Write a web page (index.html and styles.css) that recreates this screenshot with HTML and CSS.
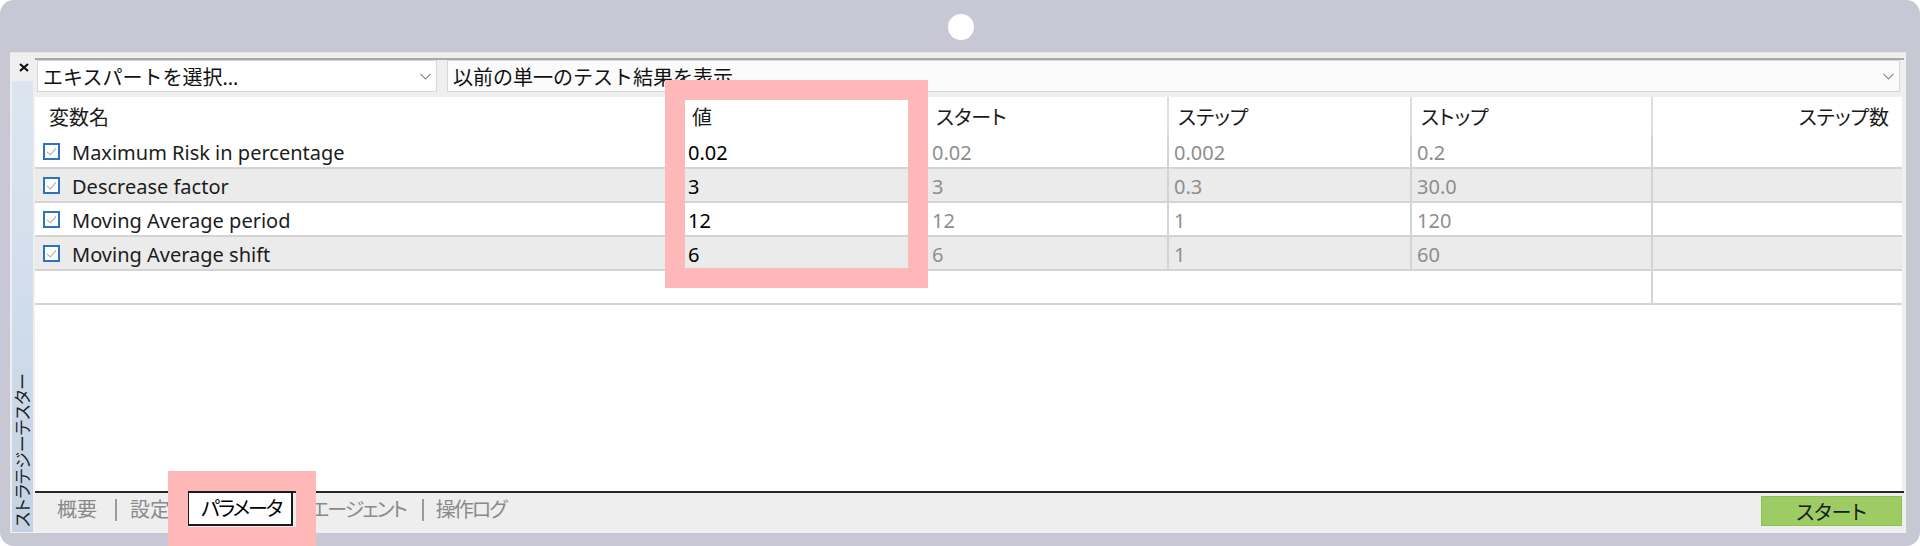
FILE: index.html
```html
<!DOCTYPE html>
<html lang="ja">
<head>
    <meta charset="UTF-8">
    <title>ストラテジーテスター</title>
    <link rel="stylesheet" href="styles.css">
</head>
<body>
    <div class="frame">
        <div class="frame-top">
            <div class="camera"></div>
        </div>

        <div class="panel">
            <!-- Side strip -->
            <div class="side">
                <div class="close">
                    <svg width="10" height="9" viewBox="0 0 10 9"><path d="M1 1 L9 8 M9 1 L1 8" stroke="#111" stroke-width="2.2"/></svg>
                </div>
                <div class="side-tab"><span>ストラテジーテスター</span></div>
            </div>

            <div class="main">
                <!-- Toolbar -->
                <div class="toolbar">
                    <div class="select select-expert">
                        <span>エキスパートを選択...</span>
                        <svg class="chevron" width="11" height="7" viewBox="0 0 11 7"><polyline points="0.5,0.8 5.5,5.8 10.5,0.8" fill="none" stroke="#8a8a8a" stroke-width="1.2"/></svg>
                    </div>
                    <div class="select select-history">
                        <span>以前の単一のテスト結果を表示</span>
                        <svg class="chevron" width="11" height="7" viewBox="0 0 11 7"><polyline points="0.5,0.8 5.5,5.8 10.5,0.8" fill="none" stroke="#8a8a8a" stroke-width="1.2"/></svg>
                    </div>
                </div>

                <!-- Parameter grid -->
                <div class="grid">
                    <div class="row head">
                        <div class="cell name">変数名</div>
                        <div class="cell">値</div>
                        <div class="cell">スタート</div>
                        <div class="cell">ステップ</div>
                        <div class="cell">ストップ</div>
                        <div class="cell count">ステップ数</div>
                    </div>
                    <div class="row">
                        <div class="cell name"><span class="check"></span>Maximum Risk in percentage</div>
                        <div class="cell value">0.02</div>
                        <div class="cell dim">0.02</div>
                        <div class="cell dim">0.002</div>
                        <div class="cell dim">0.2</div>
                        <div class="cell"></div>
                    </div>
                    <div class="row alt">
                        <div class="cell name"><span class="check"></span>Descrease factor</div>
                        <div class="cell value">3</div>
                        <div class="cell dim">3</div>
                        <div class="cell dim">0.3</div>
                        <div class="cell dim">30.0</div>
                        <div class="cell"></div>
                    </div>
                    <div class="row">
                        <div class="cell name"><span class="check"></span>Moving Average period</div>
                        <div class="cell value">12</div>
                        <div class="cell dim">12</div>
                        <div class="cell dim">1</div>
                        <div class="cell dim">120</div>
                        <div class="cell"></div>
                    </div>
                    <div class="row alt">
                        <div class="cell name"><span class="check"></span>Moving Average shift</div>
                        <div class="cell value">6</div>
                        <div class="cell dim">6</div>
                        <div class="cell dim">1</div>
                        <div class="cell dim">60</div>
                        <div class="cell"></div>
                    </div>
                    <div class="row blank">
                        <div class="cell wide"></div>
                        <div class="cell"></div>
                    </div>
                </div>

                <!-- Bottom tabs -->
                <div class="tabs">
                    <span class="tab">概要</span>
                    <span class="sep"></span>
                    <span class="tab">設定</span>
                    <span class="tab kana active">パラメータ</span>
                    <span class="tab kana">エージェント</span>
                    <span class="sep"></span>
                    <span class="tab kana">操作ログ</span>
                    <button class="start">スタート</button>
                </div>
            </div>
        </div>

        <!-- Highlight marks -->
        <div class="mark mark-value"></div>
        <div class="mark mark-tab"></div>
    </div>
</body>
</html>
```

FILE: styles.css
```css
* {
    box-sizing: border-box;
}
html, body {
    margin: 0;
    background: #ffffff;
}
body {
    font-family: "Noto Sans", "Noto Sans CJK JP", sans-serif;
    font-size: 20px;
    color: #1a1a1a;
}
.frame {
    position: relative;
    width: 1920px;
    height: 546px;
    background: #c8c8d4;
    border-radius: 14px;
    display: flex;
    flex-direction: column;
    overflow: hidden;
}
.frame-top {
    height: 52px;
    padding-top: 2px;
    display: flex;
    justify-content: center;
    align-items: center;
}
.camera {
    width: 26px;
    height: 26px;
    margin-left: 2px;
    border-radius: 50%;
    background: #ffffff;
}
.panel {
    flex: 1;
    margin: 0 14px 13px 10px;
    background: #efefef;
    display: flex;
    padding-top: 5px;
    border-top: 1px solid #e4e4e4;
}

/* Side strip */
.side {
    width: 25px;
    padding-left: 2px;
    display: flex;
    flex-direction: column;
}
.close {
    height: 23px;
    display: flex;
    align-items: center;
    justify-content: center;
    padding-bottom: 4px;
}
.side-tab {
    flex: 1;
    width: 21px;
    margin-bottom: 1px;
    background: linear-gradient(#dce6f1, #c4d3e4);
    display: flex;
    flex-direction: column;
    justify-content: flex-end;
    align-items: center;
    padding-bottom: 5px;
}
.side-tab span {
    writing-mode: vertical-rl;
    text-orientation: sideways;
    transform: rotate(180deg);
    font-size: 17px;
    line-height: 20px;
    color: #1e1e1e;
    font-feature-settings: "palt";
}

/* Main column */
.main {
    flex: 1;
    display: flex;
    flex-direction: column;
    padding-right: 2px;
    padding-bottom: 5px;
}
.toolbar {
    height: 39px;
    border-top: 2px solid #a9a9a9;
    padding: 0 4px 5px 2px;
    display: flex;
    gap: 10px;
}
.select {
    height: 32px;
    background: #ffffff;
    border: 1px solid #d6d6d6;
    display: flex;
    align-items: center;
    justify-content: space-between;
    padding: 0 5px 0 5px;
    color: #111;
    white-space: nowrap;
}
.select-expert {
    width: 400px;
}
.select-history {
    flex: 1;
    background: #fbfbfb;
}
.chevron {
    flex: none;
}

/* Parameter grid */
.grid {
    flex: 1;
    margin-right: 2px;
    background: #ffffff;
}
.row {
    display: grid;
    grid-template-columns: 648px 244px 242px 243px 241px 1fr;
    height: 34px;
    border-bottom: 2px solid #d4d4d4;
}
.row.head {
    height: 38px;
    border-bottom: none;
}
.row.alt {
    background: #ebebeb;
}
.row.blank {
    grid-template-columns: 1618px 1fr;
}
.cell {
    display: flex;
    align-items: center;
    padding: 3px 5px 0 5px;
    border-right: 2px solid #d4d4d4;
    white-space: nowrap;
    font-feature-settings: "palt";
}
.row .cell:last-child {
    border-right: none;
}
.row.blank .cell.wide {
    border-right: 2px solid #d4d4d4;
}
.head .cell {
    padding: 0 7px 0 9px;
    border-right-color: #dedede;
}
.head .cell.name {
    padding-left: 14px;
}
.head .cell.count {
    justify-content: flex-end;
    padding-right: 13px;
}
.cell.name {
    padding-left: 8px;
    border-right: none;
    color: #1c1c1c;
}
.cell.value {
    color: #000;
}
.cell.dim {
    color: #8e8e8e;
}
.check {
    width: 17px;
    height: 17px;
    margin-right: 12px;
    margin-top: -3px;
    border: 2px solid #2f73bd;
    background: #fff;
    position: relative;
}
.check::after {
    content: "";
    position: absolute;
    left: 4px;
    top: 1px;
    width: 4px;
    height: 8px;
    border-right: 1px solid #aaaaaa;
    border-bottom: 1px solid #aaaaaa;
    transform: rotate(40deg);
}

/* Bottom tabs */
.tabs {
    height: 37px;
    border-top: 2px solid #262626;
    background: #eeeeee;
    display: flex;
    align-items: flex-start;
    padding-left: 22px;
    font-feature-settings: "palt";
}
.tab {
    height: 35px;
    line-height: 33px;
    color: #8a8a8a;
    white-space: nowrap;
}
.tab.kana {
    letter-spacing: -2px;
}
.sep {
    width: 2px;
    height: 22px;
    margin: 6px 13px 0 18px;
    background: #9a9a9a;
}
.tab.kana + .sep {
    margin: 6px 12px 0 16px;
}
.tab + .tab {
    margin-left: 17px;
}
.tab.active {
    margin-top: -2px;
    height: 35px;
    padding: 0 10px 0 12px;
    line-height: 31px;
    border: 2px solid #1a1a1a;
    background: #ffffff;
    color: #000;
}
.start {
    margin: 3px 2px 0 auto;
    width: 141px;
    height: 30px;
    border: 1px solid #8fc056;
    background: #9dcb64;
    font-family: inherit;
    font-size: 20px;
    color: #1a1a1a;
    font-feature-settings: "palt";
    padding: 0;
}

/* Highlight marks */
.mark {
    position: absolute;
    border: 20px solid #ffb8b8;
}
.mark-value {
    left: 665px;
    top: 80px;
    width: 263px;
    height: 208px;
}
.mark-tab {
    left: 168px;
    top: 471px;
    width: 148px;
    height: 76px;
}
```
